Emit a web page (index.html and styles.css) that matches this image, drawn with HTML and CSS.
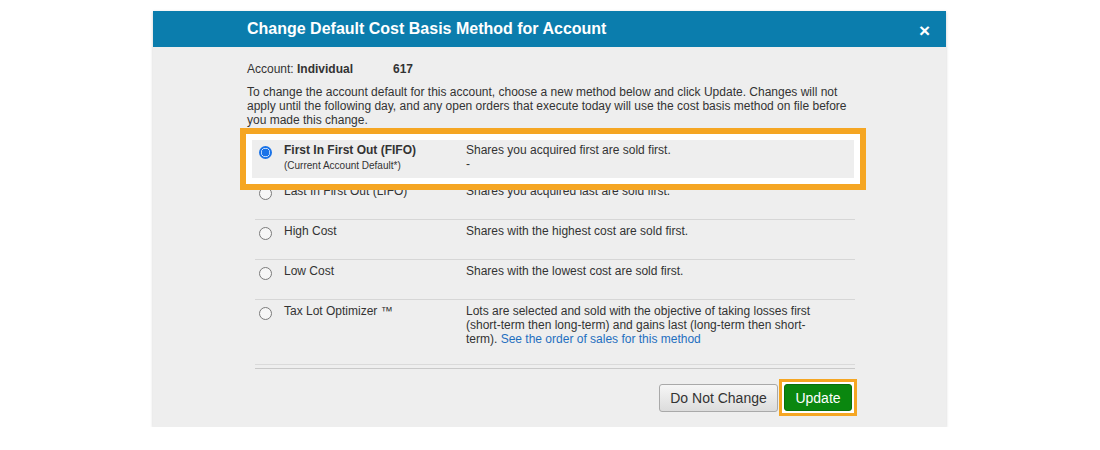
FILE: index.html
```html
<!DOCTYPE html>
<html lang="en">
<head>
<meta charset="utf-8">
<title>Change Default Cost Basis Method for Account</title>
<link rel="stylesheet" href="styles.css">
</head>
<body>
<div class="page">
  <div class="dialog">
    <div class="dialog-header">
      <h1 class="dialog-title">Change Default Cost Basis Method for Account</h1>
      <span class="close">×</span>
    </div>
    <div class="dialog-body">
      <div class="account"><span class="acct-label">Account: </span><span class="acct-name">Individual</span><span class="acct-num">617</span></div>
      <p class="intro">To change the account default for this account, choose a new method below and click Update. Changes will not apply until the following day, and any open orders that execute today will use the cost basis method on file before you made this change.</p>
      <div class="methods">
        <div class="row">
          <span class="radio checked"></span>
          <div class="label"><strong>First In First Out (FIFO)</strong><div class="sub">(Current Account Default*)</div></div>
          <div class="desc">Shares you acquired first are sold first.<br>-</div>
        </div>
        <div class="row sep">
          <span class="radio"></span>
          <div class="label">Last In First Out (LIFO)</div>
          <div class="desc">Shares you acquired last are sold first.</div>
        </div>
        <div class="row sep">
          <span class="radio"></span>
          <div class="label">High Cost</div>
          <div class="desc">Shares with the highest cost are sold first.</div>
        </div>
        <div class="row sep">
          <span class="radio"></span>
          <div class="label">Low Cost</div>
          <div class="desc">Shares with the lowest cost are sold first.</div>
        </div>
        <div class="row sep tall">
          <span class="radio"></span>
          <div class="label">Tax Lot Optimizer ™</div>
          <div class="desc">Lots are selected and sold with the objective of taking losses first (short-term then long-term) and gains last (long-term then short-term). <a class="link" href="#">See the order of sales for this method</a></div>
        </div>
        <div class="list-end"></div>
      </div>
      <div class="footer">
        <button class="btn btn-secondary">Do Not Change</button>
        <span class="focus-ring"><button class="btn btn-primary">Update</button></span>
      </div>
    </div>
    <div class="highlight"></div>
  </div>
</div>
</body>
</html>
```

FILE: styles.css
```css
* { box-sizing: border-box; }
html, body { margin: 0; padding: 0; background: #ffffff; }
body { font-family: "Liberation Sans", Arial, sans-serif; color: #333333; }

.page { padding-top: 11px; }

.dialog {
  position: relative;
  width: 793px;
  margin: 0 auto 0 153px;
  background: #eeeeee;
  box-shadow: 0 1px 3px rgba(0, 0, 0, 0.2);
}

.dialog-header {
  height: 36px;
  background: #0b7dad;
  display: flex;
  align-items: center;
  justify-content: space-between;
  padding: 0 16px 0 94px;
}
.dialog-title {
  margin: 0;
  font-size: 16px;
  font-weight: bold;
  color: #ffffff;
  line-height: 36px;
}
.close {
  color: #ffffff;
  font-weight: bold;
  font-size: 19px;
  line-height: 1;
  margin-top: 2px;
}

.dialog-body {
  padding: 15px 89px 11px 94px;
  font-size: 12px;
  line-height: 14px;
}

.account { height: 14px; }
.acct-label { display: inline-block; width: 50px; }
.acct-name { display: inline-block; width: 96px; font-weight: bold; }
.acct-num { font-weight: bold; }

.intro { margin: 9px 0 0; width: 610px; }

.methods { margin: 12px 0 0 8px; width: 600px; }
.row {
  display: grid;
  grid-template-columns: 29px 182px 360px;
  height: 40px;
  padding-top: 4px;
}
.row.sep { border-top: 1px solid #d6d6d6; }
.row.tall { height: auto; padding-bottom: 18px; }
.label strong { font-weight: bold; }
.sub { font-size: 10px; line-height: 17px; }
.desc { line-height: 14px; }
.link { color: #1f6fc0; text-decoration: none; }

.radio {
  display: block;
  width: 13px;
  height: 13px;
  margin: 3px 0 0 4px;
  border: 1px solid #7a7a7a;
  border-radius: 50%;
  background: #f6f6f6;
}
.radio.checked {
  border: 2px solid #1a73e8;
  background: radial-gradient(circle, #1a73e8 0 3.6px, #ffffff 4.2px);
}

.list-end {
  height: 5px;
  border-top: 1px solid #dadada;
  border-bottom: 1px solid #c9c9c9;
}

.footer {
  margin-top: 10px;
  display: flex;
  justify-content: flex-end;
  align-items: center;
}
.btn {
  font-family: "Liberation Sans", Arial, sans-serif;
  font-size: 14px;
  border-radius: 3px;
  cursor: pointer;
}
.btn-secondary {
  width: 119px;
  height: 28px;
  margin-right: 1px;
  color: #333333;
  border: 1px solid #a9a9a9;
  background: linear-gradient(#f6f6f6, #dcdcdc);
  padding: 0;
}
.focus-ring {
  display: inline-flex;
  border: 3px solid #f5a623;
  padding: 2px;
  background: #ffffff;
}
.btn-primary {
  width: 68px;
  height: 27px;
  color: #ffffff;
  border: 1px solid #0b6e0b;
  background: #0a870f;
  padding: 0;
}

.highlight {
  position: absolute;
  left: 87px;
  top: 117px;
  width: 626px;
  height: 62px;
  border: 6px solid #f5a623;
  pointer-events: none;
}
.highlight::before {
  content: "";
  position: absolute;
  inset: 0;
  border: 6px solid #ffffff;
}
```
